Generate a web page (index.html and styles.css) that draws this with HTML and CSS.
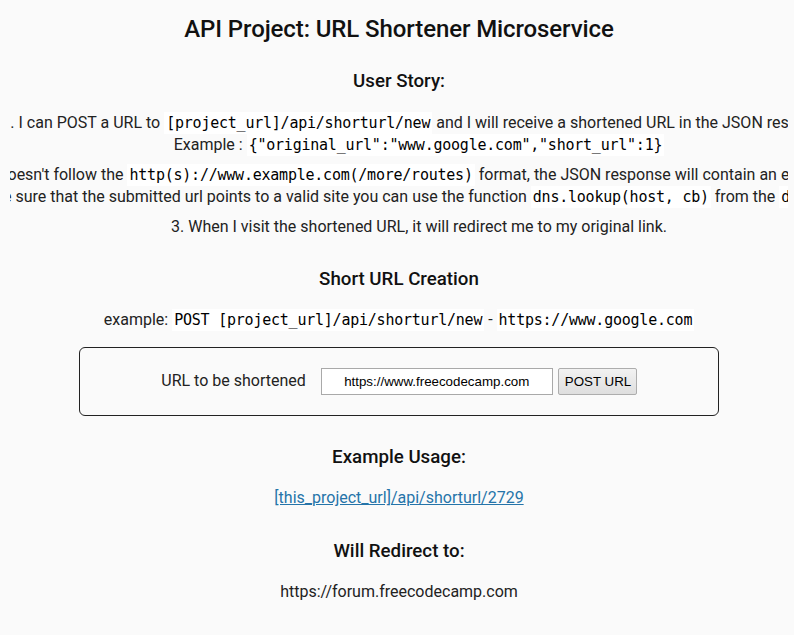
FILE: index.html
```html
<!DOCTYPE html>
<html>
<head>
<meta charset="utf-8">
<title>URL Shortener Microservice | freeCodeCamp.org</title>
<link rel="stylesheet" href="styles.css">
</head>
<body>
<h1>API Project: URL Shortener Microservice</h1>
<main>
  <section>
    <h3>User Story:</h3>
    <ol class="stories">
      <li><span class="line">I can POST a URL to <code>[project_url]/api/shorturl/new</code> and I will receive a shortened URL in the JSON response.</span><span class="line">Example : <code>{"original_url":"www.google.com","short_url":1}</code></span></li>
      <li><span class="line">If I pass an invalid URL that doesn't follow the <code>http(s)://www.example.com(/more/routes)</code> format, the JSON response will contain an error like <code>{"error":"invalid URL"}</code></span><span class="line">HINT: to be sure that the submitted url points to a valid site you can use the function <code>dns.lookup(host, cb)</code> from the <code>dns</code> core module.</span></li>
      <li><span class="line">When I visit the shortened URL, it will redirect me to my original link.</span></li>
    </ol>
    <h3>Short URL Creation</h3>
    <p>example: <code>POST [project_url]/api/shorturl/new</code> - <code>https://www.google.com</code></p>
    <form class="shortener" action="api/shorturl/new" method="POST">
      <label class="url-label" for="url_input">URL to be shortened</label>
      <input class="url-input" id="url_input" type="text" name="url" value="https://www.freecodecamp.com">
      <input class="url-submit" type="submit" value="POST URL">
    </form>
    <h3>Example Usage:</h3>
    <p><a href="#">[this_project_url]/api/shorturl/2729</a></p>
    <h3>Will Redirect to:</h3>
    <p>https://forum.freecodecamp.com</p>
  </section>
</main>
</body>
</html>
```
FILE: styles.css
```css
html {
  overflow-x: hidden;
}

body {
  margin: 8px 6px 8px 10px;
  font-family: Roboto, "Noto Sans", sans-serif;
  font-size: 16px;
  color: #222;
  background-color: #fafafa;
  text-align: center;
  line-height: 1.4em;
}

h1 {
  font-size: 24px;
  font-weight: 500;
  letter-spacing: -0.1px;
  margin: 10px 0 16px;
  color: #111;
}

h3 {
  font-size: 18.72px;
  font-weight: 500;
  margin: 30px 0 18.72px;
  color: #111;
}

p {
  margin: 16px 0;
}

.stories {
  margin: 16px 0;
  padding-left: 40px;
  list-style: none;
  counter-reset: story;
}

.stories li {
  counter-increment: story;
  display: flex;
  flex-direction: column;
  align-items: center;
  white-space: nowrap;
  line-height: 22px;
  margin-bottom: 8px;
}

.stories .line:first-child::before {
  content: counter(story) ". ";
}

code {
  font-family: "DejaVu Sans Mono", monospace;
  font-size: 15px;
  letter-spacing: -0.23px;
  padding: 2px;
  color: #000;
  background-color: #fff;
}

a {
  color: #2574a9;
}

.shortener {
  display: flex;
  justify-content: center;
  align-items: center;
  width: 640px;
  box-sizing: border-box;
  margin: 16px auto 0;
  padding: 20px;
  border: 1px solid #222;
  border-radius: 6px;
}

.url-label {
  margin-right: 15px;
}

.url-input {
  box-sizing: border-box;
  width: 232px;
  height: 27px;
  margin: 0 5px 0 0;
  padding: 0 4px;
  border: 1px solid #a9a9a9;
  background: #fff;
  font-family: "Liberation Sans", Arial, sans-serif;
  font-size: 13.33px;
  color: #000;
  text-align: center;
}

.url-submit {
  box-sizing: border-box;
  width: 79px;
  height: 27px;
  margin: 0;
  padding: 0 6px;
  border: 1px solid #adadad;
  border-radius: 2px;
  background: linear-gradient(#f2f2f2, #dedede);
  font-family: "Liberation Sans", Arial, sans-serif;
  font-size: 13.33px;
  color: #000;
}
```
